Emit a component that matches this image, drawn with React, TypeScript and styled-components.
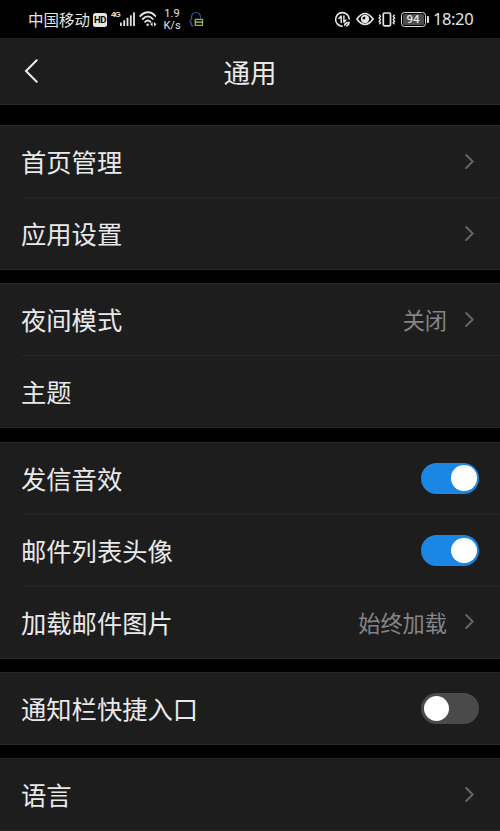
import React, { useState } from "react";
import styled, { createGlobalStyle } from "styled-components";

const GlobalStyle = createGlobalStyle`
  * { box-sizing: border-box; }
  html, body { margin: 0; background: #000; }
  body {
    font-family: "Noto Sans CJK SC", "Noto Sans", sans-serif;
    color: #e9e9ea;
    overflow: hidden;
  }
`;

const Screen = styled.main`
  width: 500px;
  height: 831px;
  overflow: hidden;
  background: #000;
  display: flex;
  flex-direction: column;
`;

const StatusBar = styled.header`
  height: 38px;
  flex: none;
  display: flex;
  justify-content: space-between;
  padding: 0 27px 0 28px;
  color: #e4e4e4;
`;

const StatusGroup = styled.div<{ $gap?: number }>`
  display: flex;
  align-items: center;
  height: 38px;
  gap: ${(p) => p.$gap ?? 0}px;
  svg { display: block; flex: none; }
`;

const Carrier = styled.span`
  width: 65px;
  font-size: 15.5px;
  line-height: 38px;
  white-space: nowrap;
`;

const HdBadge = styled.span`
  width: 14px;
  height: 14px;
  margin-top: 1px;
  border-radius: 2.5px;
  background: #e6e6e6;
  color: #000;
  font: 700 9.5px/14px Roboto, sans-serif;
  text-align: center;
  letter-spacing: -0.4px;
`;

const NetworkType = styled.span`
  width: 9px;
  margin-left: 4px;
  align-self: flex-start;
  padding-top: 10px;
  font: 700 8px/10px "Liberation Sans", sans-serif;
  letter-spacing: -1px;
`;

const Speed = styled.span`
  width: 22px;
  margin: 2px 6px 0 3px;
  font: 400 11px/12px Roboto, sans-serif;
  text-align: center;
  white-space: pre-line;
`;

const BatteryGroup = styled.span`
  display: flex;
  align-items: center;
  gap: 1px;
`;

const Battery = styled.span`
  width: 25px;
  height: 15px;
  border: 1.5px solid #dedede;
  border-radius: 3.5px;
  background: linear-gradient(#4c4c4c, #4c4c4c) content-box #000;
  padding: 1px;
  font: 500 11.5px/11px Roboto, sans-serif;
  text-align: center;
`;

const BatteryTip = styled.span`
  width: 2px;
  height: 7px;
  border-radius: 0 1px 1px 0;
  background: #dedede;
`;

const Clock = styled.span`
  width: 40px;
  font: 400 16.5px/38px "Noto Sans", sans-serif;
  letter-spacing: -0.4px;
`;

const NavBar = styled.nav`
  height: 67px;
  flex: none;
  display: grid;
  grid-template-columns: 60px 1fr 60px;
  align-items: center;
  background: #1d1d1e;
  border-bottom: 1px solid #29292a;
  margin-bottom: 20px;
`;

const BackButton = styled.button`
  border: 0;
  padding: 0 0 0 24px;
  background: none;
  height: 66px;
  display: flex;
  align-items: center;
`;

const Title = styled.h1`
  margin: 0;
  padding-top: 1px;
  font-size: 26.5px;
  line-height: 40px;
  font-weight: 400;
  text-align: center;
`;

const Section = styled.section<{ $height: number; $gap?: number }>`
  height: ${(p) => p.$height}px;
  flex: none;
  margin-bottom: ${(p) => p.$gap ?? 13}px;
  background: #1d1d1e;
  border-top: 1px solid #262627;
  border-bottom: 1px solid #262627;
  display: flex;
  flex-direction: column;
`;

const Row = styled.div`
  flex: 1;
  min-height: 0;
  margin-left: 21px;
  padding-right: 21px;
  display: flex;
  align-items: center;
  & + & { border-top: 1px solid #262628; }
`;

const Label = styled.span`
  flex: 1;
  font-size: 25.3px;
  line-height: 38px;
  padding-bottom: 1px;
`;

const Value = styled.span`
  font-size: 22.2px;
  line-height: 34px;
  padding-bottom: 1px;
  color: #858587;
  margin-right: 17px;
`;

const ArrowBox = styled.span`
  width: 15px;
  display: flex;
  svg { display: block; }
`;

const Track = styled.button<{ $on: boolean }>`
  width: 58px;
  height: 31px;
  padding: 0 2.5px;
  border: 0;
  border-radius: 16px;
  background: ${(p) => (p.$on ? "#1b87e5" : "#4a4a4b")};
  display: flex;
  align-items: center;
  justify-content: ${(p) => (p.$on ? "flex-end" : "flex-start")};
`;

const Knob = styled.span`
  width: 25.5px;
  height: 25.5px;
  border-radius: 50%;
  background: #fff;
`;

const SignalIcon = () => (
  <svg width="18" height="16" viewBox="0 0 18 16" fill="#e4e4e4">
    <rect x="0" y="11.5" width="1.8" height="3.5" rx=".5" />
    <rect x="3.3" y="9.3" width="1.8" height="5.7" rx=".5" />
    <rect x="6.6" y="6.8" width="1.8" height="8.2" rx=".5" />
    <rect x="9.9" y="4.2" width="1.8" height="10.8" rx=".5" />
    <rect x="13.1" y="1.2" width="1.8" height="13.8" rx=".5" />
  </svg>
);

const WifiIcon = () => (
  <svg width="20" height="18" viewBox="0 0 20 18" fill="none" stroke="#e4e4e4" strokeWidth="1.9" strokeLinecap="round">
    <path d="M2.3 6C7 .9 13 .9 17.3 6" />
    <path d="M4.8 9c3.2-3.5 7-3.5 10 0" />
    <path d="M7.1 11.8c1.7-1.7 3.7-1.7 5.4 0" />
    <circle cx="9.6" cy="14.7" r="1.2" fill="#e4e4e4" stroke="none" />
    <path d="M14.6 12 12.2 14.2l2.4 2.2ZM16 12l2.4 2.2L16 16.4Z" fill="#e4e4e4" stroke="none" />
  </svg>
);

const MessengerIcon = () => (
  <svg width="15" height="17" viewBox="0 0 15 17" fill="none" strokeLinecap="round" strokeLinejoin="round">
    <path
      d="M4.2 14.6c-.7.6-1.8.3-2-.4.2-.5.5-.8.7-1.1-.4-.6-.7-1.2-.8-1.8-.4.5-.9.5-1-.1-.2-1 .6-2.4 1.5-3.4C2.1 3.8 4 1.5 6.9 1.5s4.7 2.1 4.6 5.5"
      stroke="#355b9b"
      strokeWidth="1.1"
    />
    <path d="M6.3 8.3h7.2v6H6.3Z" stroke="#8fb548" strokeWidth="1.3" />
    <path d="M6.5 11.1h6.8" stroke="#b1c66a" strokeWidth="1.3" />
  </svg>
);

const NfcIcon = () => (
  <svg width="17" height="17" viewBox="0 0 17 17" fill="none" stroke="#e4e4e4" strokeWidth="1.6" strokeLinecap="round" strokeLinejoin="round">
    <path d="M8.2 15.2A6.8 6.8 0 1 1 15.2 8" />
    <path d="M7.2 11.4V5L4.9 7.4M9.9 5v6.2l2-2.2" strokeWidth="1.5" />
    <path d="M10.2 15.2c-.8-3 1.6-4.7 5.6-4.4.2 3.5-2 5.6-4.6 4.2Z" fill="#e4e4e4" stroke="none" />
    <path d="m10 15.8 3.4-3" stroke="#000" strokeWidth=".8" />
  </svg>
);

const EyeIcon = () => (
  <svg width="18" height="14" viewBox="0 0 18 14">
    <path d="M.9 7Q9-4 17.1 7 9 18 .9 7Z" fill="none" stroke="#e4e4e4" strokeWidth="1.7" strokeLinejoin="round" />
    <circle cx="9" cy="7" r="4.2" fill="#e4e4e4" />
    <path d="M9.2 4.4v2.8H6.5a2.7 2.7 0 0 1 2.7-2.8Z" fill="#000" />
  </svg>
);

const VibrateIcon = () => (
  <svg width="18" height="17" viewBox="0 0 18 17" fill="none" stroke="#e4e4e4" strokeLinejoin="round">
    <rect x="5.3" y="2" width="7.2" height="12.8" rx="1.2" strokeWidth="1.7" />
    <path d="M1.1 3.8 2.5 5.4 1.1 7l1.4 1.6-1.4 1.6 1.4 1.6-1.2 1.4M16.6 3.8l-1.4 1.6L16.6 7l-1.4 1.6 1.4 1.6-1.4 1.6 1.2 1.4" strokeWidth="1.4" />
  </svg>
);

const BackIcon = () => (
  <svg width="15" height="26" viewBox="0 0 15 26" fill="none" stroke="#ededed" strokeWidth="2" strokeLinecap="round">
    <path d="M12.7 2.3 2 13l10.7 10.7" />
  </svg>
);

const Arrow = () => (
  <ArrowBox>
    <svg width="12" height="18" viewBox="0 0 12 18" fill="none" stroke="#646466" strokeWidth="2" strokeLinecap="round">
      <path d="m2.2 2 6.5 6.5L2.2 15" />
    </svg>
  </ArrowBox>
);

function Toggle({ initial }: { initial: boolean }) {
  const [on, setOn] = useState(initial);
  return (
    <Track $on={on} role="switch" aria-checked={on} onClick={() => setOn(!on)}>
      <Knob />
    </Track>
  );
}

type Item = { label: string; value?: string; arrow?: boolean; toggle?: boolean };

const sections: { height: number; gap?: number; items: Item[] }[] = [
  { height: 145, items: [{ label: "首页管理", arrow: true }, { label: "应用设置", arrow: true }] },
  { height: 145, gap: 13.5, items: [{ label: "夜间模式", value: "关闭", arrow: true }, { label: "主题" }] },
  {
    height: 217.5,
    items: [
      { label: "发信音效", toggle: true },
      { label: "邮件列表头像", toggle: true },
      { label: "加载邮件图片", value: "始终加载", arrow: true },
    ],
  },
  { height: 73, items: [{ label: "通知栏快捷入口", toggle: false }] },
  { height: 73, items: [{ label: "语言", arrow: true }] },
];

export default function App() {
  return (
    <>
      <GlobalStyle />
      <Screen>
        <StatusBar>
          <StatusGroup>
            <Carrier>中国移动</Carrier>
            <HdBadge>HD</HdBadge>
            <NetworkType>4G</NetworkType>
            <SignalIcon />
            <WifiIcon />
            <Speed>{"1.9\nK/s"}</Speed>
            <MessengerIcon />
          </StatusGroup>
          <StatusGroup $gap={4.5}>
            <NfcIcon />
            <EyeIcon />
            <VibrateIcon />
            <BatteryGroup>
              <Battery>94</Battery>
              <BatteryTip />
            </BatteryGroup>
            <Clock>18:20</Clock>
          </StatusGroup>
        </StatusBar>
        <NavBar>
          <BackButton aria-label="返回">
            <BackIcon />
          </BackButton>
          <Title>通用</Title>
        </NavBar>
        {sections.map((section) => (
          <Section key={section.items[0].label} $height={section.height} $gap={section.gap}>
            {section.items.map((item) => (
              <Row key={item.label}>
                <Label>{item.label}</Label>
                {item.value && <Value>{item.value}</Value>}
                {item.arrow && <Arrow />}
                {item.toggle !== undefined && <Toggle initial={item.toggle} />}
              </Row>
            ))}
          </Section>
        ))}
      </Screen>
    </>
  );
}
